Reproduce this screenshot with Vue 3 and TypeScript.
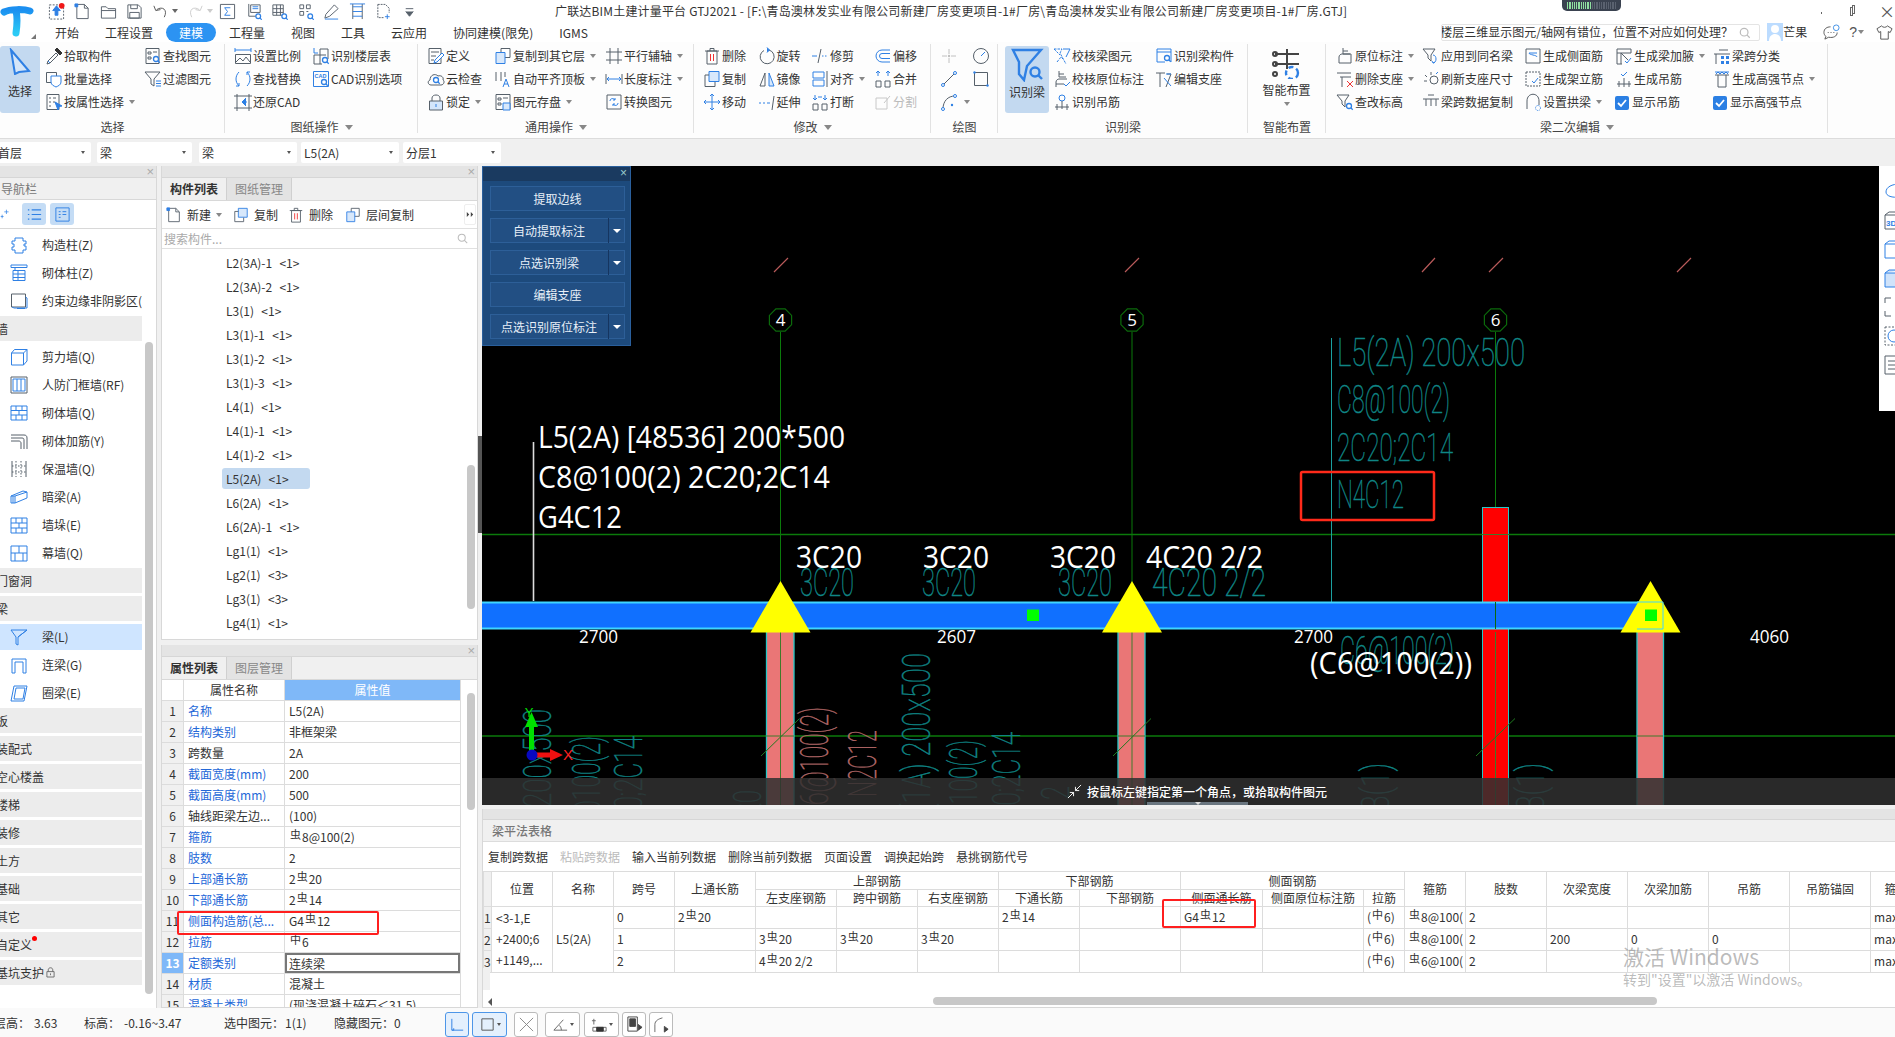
<template>
  <div class="app">
    <!-- title + tabs -->
    <header class="head">
      <div class="logo">
        <svg width="34" height="36" viewBox="0 0 34 36">
          <defs>
            <linearGradient id="lg" x1="0" y1="0" x2="0" y2="1">
              <stop offset="0" stop-color="#1b8ff0" />
              <stop offset="1" stop-color="#2ccbf5" />
            </linearGradient>
          </defs>
          <path d="M4 10c6-3 20-3 26-1M16 9c2 8 1 15 0 22" fill="none" stroke="url(#lg)" stroke-width="7" stroke-linecap="round" />
        </svg>
        <i class="logo-tri"></i>
      </div>
      <div class="head-main">
        <div class="qrow">
          <div class="quick">
            <span v-for="(q, i) in quick" :key="i" class="q-item" :class="{ redo: q.pale }">
              <svg class="ico" viewBox="0 0 18 18" v-html="icons[q.i]"></svg>
              <i v-if="q.c" class="caret" :class="{ pale: q.pale }"></i>
            </span>
          </div>
          <div class="wintitle">广联达BIM土建计量平台 GTJ2021 - [F:\青岛澳林发实业有限公司新建厂房变更项目-1#厂房\青岛澳林发实业有限公司新建厂房变更项目-1#厂房.GTJ]</div>
          <div class="winbtns">
            <span class="w-min"></span>
            <span class="w-max"></span>
            <span class="w-close">×</span>
          </div>
        </div>
        <div class="trow">
          <nav class="tabs">
            <span v-for="t in tabs" :key="t" class="tab" :class="{ on: t === '建模' }">{{ t }}</span>
          </nav>
          <div class="trow-right">
            <div class="helpbox">
              <span class="helptext">楼层三维显示图元/轴网有错位，位置不对应如何处理？</span>
              <svg class="helpmag" viewBox="0 0 14 14"><circle cx="6" cy="6" r="4.5" fill="none" stroke="#bbb" stroke-width="1.4" /><path d="M9.5 9.5 12.5 12.5" stroke="#bbb" stroke-width="1.4" /></svg>
            </div>
            <svg class="avatar" viewBox="0 0 16 18"><rect width="16" height="18" fill="#bcdcff" /><circle cx="8" cy="6" r="4" fill="#fff" /><path d="M2 18c0-5 3-7 6-7s6 2 6 7z" fill="#fff" /></svg>
            <span class="uname">芒果</span>
            <svg class="top-ic chat" viewBox="0 0 18 18"><path d="M8 3c-4 0-7 2-7 6 0 2 1 3 2 4l-1 3 4-2c5 1 9-1 9-5" fill="none" stroke="#555" /><circle cx="14" cy="4" r="3" fill="none" stroke="#3d8ee6" /><path d="M5 9h1M8 9h1M11 9h1" stroke="#555" /></svg>
            <span class="qmark">?</span><i class="caret mini"></i>
            <svg class="top-ic shirt" viewBox="0 0 18 18"><path d="M6 2 1 5l2 4 2-1v8h8V8l2 1 2-4-5-3c-1 2-5 2-6 0z" fill="none" stroke="#555" /></svg>
            <span class="upchev"></span>
          </div>
        </div>
      </div>
      <div class="gadget"><i v-for="n in 22" :key="n" :class="{ lit: n < 12 }"></i></div>
    </header>

    <!-- ribbon -->
    <section class="ribbon">
      <div v-for="g in ribbon" :key="g.title" class="rgroup" :style="{ width: g.w + 'px', paddingLeft: g.pad + 'px' }">
        <div class="rbody">
          <button v-if="g.large" class="rlarge" :class="{ sel: g.large.sel }" :style="{ width: g.large.w + 'px', marginRight: (g.large.mr || 0) + 'px' }">
            <svg :width="g.large.sw" :height="g.large.sh" :viewBox="`0 0 ${g.large.sw} ${g.large.sh}`" v-html="icons[g.large.i]"></svg>
            <span :style="{ marginTop: g.large.gap + 'px' }">{{ g.large.t }}</span>
            <i v-if="g.large.c" class="caret"></i>
          </button>
          <div v-for="(c, ci) in g.cols" :key="ci" class="rcol" :style="{ width: c.w + 'px' }">
            <div v-for="it in c.items" :key="it.i + it.t" class="ritem" :class="{ off: it.off }">
              <span v-if="it.chk" class="chk"><svg viewBox="0 0 14 14"><path d="M3 7l3 3 5-6" fill="none" stroke="#fff" stroke-width="1.8" /></svg></span>
              <svg v-else class="ico" viewBox="0 0 18 18" v-html="icons[it.i]"></svg>
              <span v-if="it.t" class="ritem-t">{{ it.t }}</span>
              <i v-if="it.c" class="caret"></i>
            </div>
          </div>
        </div>
        <div class="rtitle" :style="{ marginLeft: -g.pad + 'px' }">{{ g.title }}<i v-if="g.more" class="caret big"></i></div>
      </div>
    </section>

    <!-- combo row -->
    <section class="combos">
      <div v-for="c in combos" :key="c.k" class="combo" :class="c.k">
        <span>{{ c.t }}</span><i class="caret dark"></i>
      </div>
    </section>

    <main class="main">
      <!-- navigation -->
      <aside class="nav">
        <div class="grip"><span class="x">×</span></div>
        <div class="nav-title">导航栏</div>
        <div class="nav-tools">
          <svg class="spark" viewBox="0 0 14 14"><path d="M9 1v6M6 4h6M3 8v5M1 10.500h4" stroke="#2f80e4" fill="none" /></svg>
          <span class="nbtn">
            <svg viewBox="0 0 18 18"><path d="M6 4h10M6 9h10M6 14h10M2 4h1.500M2 9h1.500M2 14h1.500" stroke="#2f80e4" stroke-width="1.300" fill="none" /></svg>
          </span>
          <span class="nbtn">
            <svg viewBox="0 0 18 18"><path d="M2 2h14v14H2zM5 6h2M9 6h4M5 9h2M9 9h4M5 12h2" stroke="#2f80e4" fill="none" /></svg>
          </span>
        </div>
        <div class="nav-list">
          <div class="nav-scroll"></div>
          <template v-for="(n, i) in navList" :key="i">
            <div v-if="n.h" class="nav-h">
              <span>{{ n.t }}</span>
              <i v-if="n.dot" class="reddot"></i>
              <svg v-if="n.lock" class="navlock" viewBox="0 0 10 12"><path d="M2.500 5V3c0-3 5-3 5 0v2M1 5h8v6H1zM5 7v2" fill="none" stroke="#666" /></svg>
            </div>
            <div v-else class="nav-i" :class="{ sel: n.sel }">
              <svg class="nico" viewBox="0 0 18 18" v-html="icons[n.i!]"></svg>
              <span>{{ n.t }}</span>
            </div>
          </template>
        </div>
      </aside>

      <!-- component list + properties -->
      <div class="mid">
        <section class="panel comp">
          <div class="grip"><span class="x">×</span></div>
          <div class="ptabs"><span class="ptab on">构件列表</span><span class="ptab">图纸管理</span></div>
          <div class="ctools">
            <span v-for="t in compTools" :key="t.t" class="ctool" :style="{ marginRight: t.mr + 'px' }">
              <svg class="ico" viewBox="0 0 18 18" v-html="icons[t.i]"></svg>{{ t.t }}<i v-if="t.c" class="caret"></i>
            </span>
            <span class="overflow"><svg viewBox="0 0 10 8"><path d="M1 1l3 3-3 3zM6 1l3 3-3 3z" fill="#444" /></svg></span>
          </div>
          <div class="csearch">
            <span>搜索构件...</span>
            <svg viewBox="0 0 14 14"><circle cx="6" cy="6" r="4.500" fill="none" stroke="#bbb" stroke-width="1.300" /><path d="M9.500 9.500 13 13" stroke="#bbb" stroke-width="1.300" /></svg>
          </div>
          <div class="clist">
            <div class="cscroll"></div>
            <div v-for="c in compList" :key="c" class="crow"><span :class="{ on: c === 'L5(2A)  <1>' }">{{ c }}</span></div>
          </div>
        </section>

        <section class="panel props">
          <div class="grip"><span class="x">×</span></div>
          <div class="ptabs"><span class="ptab on">属性列表</span><span class="ptab">图层管理</span></div>
          <div class="ptable">
            <div class="pscroll"></div>
            <div class="prow phead">
              <span class="pn"></span><span class="pk">属性名称</span><span class="pv">属性值</span>
            </div>
            <div v-for="(r, i) in propRows" :key="i" class="prow" :class="{ cur: i === 12 }">
              <span class="pn">{{ i + 1 }}</span>
              <span class="pk" :class="{ link: r.link }">{{ r.k }}</span>
              <span class="pv" v-html="rebar(r.v)"></span>
            </div>
            <div class="redmark pmark"></div>
          </div>
        </section>
      </div>

      <!-- drawing + table -->
      <div class="right">
        <div class="handle"></div>
        <div class="canvas">
          <svg class="draw" width="1413" height="639" viewBox="482 166 1413 639">
            <g stroke="#0b7a0b" stroke-width="1.300">
              <path d="M482 534.500H1895M482 736H1895" fill="none" />
              <path d="M780.500 332V805M1132 332V805M1495.500 332V805" fill="none" stroke-width="1" />
            </g>
            <g stroke="#b85a5a" stroke-width="1.200">
              <path d="M774 272 788 258M1125 272 1139 258M1422 272 1435 258M1489 272 1503 258M1677 272 1691 258" />
            </g>
            <g v-for="a in axes" :key="a.n">
              <polygon :points="octagon(a.x, 320, 12)" fill="#000" stroke="#0b6a0b" stroke-width="1.200" />
              <text :x="a.x" y="326" class="axis-n" text-anchor="middle">{{ a.n }}</text>
            </g>
            <path d="M1331.500 338V614" stroke="#1ba0a0" fill="none" />

            <!-- columns -->
            <rect x="1482.500" y="507.500" width="26" height="300" fill="#ff0000" stroke="#25c8c8" />
            <rect x="766.500" y="629" width="27.500" height="180" fill="#ea7676" stroke="#25c8c8" stroke-width="1.300" />
            <rect x="1118" y="629" width="27" height="180" fill="#ea7676" stroke="#25c8c8" stroke-width="1.300" />
            <rect x="1637" y="629" width="26.500" height="180" fill="#ea7676" stroke="#25c8c8" stroke-width="1.300" />
            <path d="M780.500 632V805M1132 632V805M1495.500 632V805M1637 736H1663M1118 736H1145M766 736H794M1482 534.500H1509" stroke="#3f7a2a" fill="none" />
            <path d="M761 756 799.500 718.500M1113 756 1151 718.500M1476 756 1515 718.500" stroke="#1f7a1f" fill="none" />

            <!-- beam -->
            <rect x="478" y="602.500" width="1172" height="26" fill="#1070ff" stroke="#3fd5ff" stroke-width="2" />
            <path d="M533.500 442V601" stroke="#ddd" stroke-width="1.600" fill="none" />
            <path d="M1495.500 602V629" stroke="#0b6a0b" fill="none" />
            <polygon v-for="t in triangles" :key="t" :points="`${t - 30},632.500 ${t},581 ${t + 30},632.500`" fill="#ffff00" />
            <path d="M1637 602h26v27h-26" fill="none" stroke="#3fd5ff" />
            <rect x="1027" y="609.500" width="12" height="11.500" fill="#00ff00" />
            <rect x="1645" y="609.500" width="12" height="11.500" fill="#00ff00" />

            <!-- cad text -->
            <text v-for="(c, i) in cadText" :key="i" :x="c.x" :y="c.y" class="cad" :fill="c.c" :stroke="c.c" :font-size="c.s" :textLength="c.l" lengthAdjust="spacingAndGlyphs" :transform="c.r ? `rotate(-90 ${c.x} ${c.y})` : undefined">{{ c.t }}</text>
            <text v-for="(w, i) in whiteText" :key="'w' + i" :x="w.x" :y="w.y" class="wt" :font-size="w.s" :textLength="w.l" lengthAdjust="spacingAndGlyphs">{{ w.t }}</text>

            <rect x="1301" y="472" width="133" height="48" rx="1.500" fill="none" stroke="#ff2a1a" stroke-width="2.500" />

            <!-- axis gizmo -->
            <path d="M531.500 755V722" stroke="#00e000" stroke-width="5" fill="none" />
            <polygon points="525,727 531.500,712 538,727" fill="#00e000" />
            <path d="M532 755H552" stroke="#f01010" stroke-width="5" fill="none" />
            <polygon points="550,749 563,755 550,761" fill="#f01010" />
            <circle cx="532" cy="755" r="5.500" fill="#0808c0" />
            <text x="529" y="717" class="giz" fill="#00e000" font-size="13" text-anchor="middle">Y</text>
            <text x="568" y="760" class="giz" fill="#ff2020" font-size="15" text-anchor="middle">X</text>
          </svg>

          <div class="fpanel">
            <div class="fhead"><span>×</span></div>
            <div v-for="b in floatBtns" :key="b.t" class="fbtn">
              <span class="fbtn-t">{{ b.t }}</span>
              <span v-if="b.drop" class="fdrop"><i></i></span>
            </div>
          </div>

          <div class="sidebar">
            <svg v-for="(s, i) in sideIcons" :key="i" viewBox="0 0 20 20" v-html="s"></svg>
          </div>

          <div class="hint">
            <svg viewBox="0 0 16 16"><path d="M1 15 7 9M3 9h4v4M15 1 9 7M13 7H9V3" fill="none" stroke="#fff" /></svg>
            <span>按鼠标左键指定第一个角点，或拾取构件图元</span>
          </div>
          <div class="pull"><i></i></div>
        </div>

        <section class="lower">
          <div class="grip plain"></div>
          <div class="lower-title">梁平法表格</div>
          <div class="ltools">
            <span v-for="t in tableTools" :key="t" :class="{ dim: t === '粘贴跨数据' }">{{ t }}</span>
          </div>
          <div class="tblwrap">
            <table class="span-table">
              <colgroup><col v-for="(w, i) in colW" :key="i" :style="{ width: w + 'px' }" /></colgroup>
              <thead>
                <tr class="h1">
                  <th rowspan="2" class="rn"></th>
                  <th rowspan="2">位置</th>
                  <th rowspan="2">名称</th>
                  <th rowspan="2">跨号</th>
                  <th rowspan="2">上通长筋</th>
                  <th colspan="3">上部钢筋</th>
                  <th colspan="2">下部钢筋</th>
                  <th colspan="3">侧面钢筋</th>
                  <th v-for="h in tailHeads" :key="h" rowspan="2">{{ h }}</th>
                </tr>
                <tr class="h2">
                  <th v-for="h in subHeads" :key="h">{{ h }}</th>
                </tr>
              </thead>
              <tbody>
                <tr v-for="(r, i) in spanRows" :key="i">
                  <td class="rn">{{ i + 1 }}</td>
                  <td v-if="i === 0" rowspan="3" class="loc">&lt;3-1,E<br />+2400;6<br />+1149,...</td>
                  <td v-if="i === 0" rowspan="3">L5(2A)</td>
                  <td v-for="(c, j) in r" :key="j" v-html="rebar(c)"></td>
                </tr>
              </tbody>
            </table>
            <div class="tbl-gutter"></div>
            <div class="hscroll"><i class="harrow"></i><span class="hthumb"></span></div>
            <div class="redmark tmark"></div>
          </div>
          <div class="watermark">
            <b>激活 Windows</b>
            <small>转到"设置"以激活 Windows。</small>
          </div>
        </section>
      </div>
    </main>

    <!-- status bar -->
    <footer class="status">
      <span class="st-a">层高：</span><span class="st-b">3.63</span>
      <span class="st-c">标高：</span><span class="st-d">-0.16~3.47</span>
      <span class="st-e">选中图元：</span><span class="st-f">1(1)</span>
      <span class="st-g">隐藏图元：</span><span class="st-h">0</span>
      <div class="sbtns">
        <span v-for="b in statusBtns" :key="b.i" class="sbtn" :class="{ on: b.on, wide: b.c }" :style="{ marginRight: b.mr + 'px' }">
          <svg viewBox="0 0 18 18" v-html="icons[b.i]"></svg>
          <i v-if="b.c" class="caret dark"></i>
        </span>
      </div>
    </footer>
  </div>
</template>

<script setup lang="ts">
const B = '#2f80e4'
const G = '#56606a'
const p = (d: string, c = G, f = 'none') => `<path d="${d}" stroke="${c}" fill="${f}"/>`
const mag = (x: number, y: number, r = 2.5) =>
  `<circle cx="${x}" cy="${y}" r="${r}" fill="#fff" stroke="${B}" stroke-width="1.300"/><path d="M${x + r * 0.7} ${y + r * 0.7}l2 2" stroke="${B}" stroke-width="1.300"/>`

const icons: Record<string, string> = {
  // quick access
  upload: p('M1.500 2h15v15h-15z', G).replace('/>', ' stroke-dasharray="2 1.500"/>') + p('M9 3 5 8h2.500v5h3V8H13z', B, B) + '<circle cx="14.500" cy="3" r="3" fill="#f01818"/>',
  newdoc: p('M3 1.500h8l4 4v11H3zM11 1.500v4h4') + p('M1 1h3v3H1z', B, B),
  open: p('M1.500 4h5l2 2h8v10h-15z') + p('M1.500 8h15'),
  save: p('M2 2h11l3 3v11H2zM5 2v4h7V2M4 10h10v6H4z'),
  undo: p('M5 7c6-4 12 0 8 8M2 3l2 5 5-1', '#555'),
  redo: p('M13 7C7 3 1 7 5 15M16 3l-2 5-5-1', '#ccc'),
  sum: p('M1.500 1.500h15v15h-15z') + p('M12 5H6l3 4-3 4h6', B),
  qa: p('M4 1v13h13M6 2h10v8H6z') + p('M8 4h6M8 6h6', B) + mag(14, 14),
  qb: p('M2 2h11v11H2zM2 6h11M2 10h11M6 2v11M10 2v11') + mag(14, 14),
  qc: p('M3 2h4v4H3zM10 2h4v4h-4zM3 9h4v4H3zM10 9h2') + mag(14, 14),
  pen: p('M12 2l4 4-9 8-5 2 1-4z') + p('M2 17h14', B),
  qd: p('M4 1v16M14 1v16') + p('M4 4h10M4 9h10M4 14h10M1 1h16', B),
  qe: p('M3 1.500h8l4 4v5M3 1.500v14h6') .replace('/>', ' stroke-dasharray="2 1"/>') + p('M13 12v5M10.500 14.500h5', B),
  more: p('M5 6h8', G) + p('M5 9l4 5 4-5', G, G),
  // 选择
  pick: p('M3 14 11 6l2 2-8 8-3 1z') + p('M10 3l5 5', '#333') + p('M12 1l5 5-2 2-5-5z', '#333', '#333') + p('M3 14l2 2', B),
  findEl: p('M2 1.500h13v15H2zM4 5h3v2H4zM9 5h4M4 10h3v2H4z') + mag(12, 12),
  batch: p('M1.500 2.500h10v10h-10z') + p('M6 6h10v6c0 3-3 4-5 5-2-1-5-2-5-5z', B, '#fff'),
  byProp: p('M2 1.500h12v15H2zM4 5h2M8 5h3M4 9h2M8 9h2M4 13h2') + p('M10 9l7 4-3 .5-1 3.500z', B, B),
  filter: p('M1 2h15l-6 7v7l-3-2V9z') + p('M12 11h5M12 13.500h5M12 16h5', B),
  // 图纸操作
  scale: p('M1 1v4M17 1v4M1 3h16', B) + p('M1.500 7.500h15v9h-15zM2 15l4-4 3 3 3-4 4 5'),
  floorT: p('M2 1v5h4', B) + p('M8 2h8v10M2 8h12M2 8v9h8M8 2v15') + mag(13, 13),
  replace: p('M5 2C1 6 1 12 5 16M2 16h3v-3', B) + p('M13 16c4-4 4-10 0-14M16 2h-3v3', B),
  cadOpt: p('M1.500 1.500h15v15h-15z', B) + `<text x="2.500" y="8" font-size="5.500" font-family="Liberation Sans" font-weight="700" fill="${B}">CAD</text>` + mag(12, 12),
  restore: p('M3 1v17M15 1v17M0 3h18M0 15h18') + p('M12 5 8 9l4 4M8 9h5', B, B),
  // 通用操作
  define: p('M2 1.500h12v15H2zM4 5h8M4 9h5M4 13h3') + p('M15 6l2 2-7 7-3 1 1-3z', B, '#fff'),
  cloud: p('M4 15c-3 0-4-4-1-5 0-5 5-7 8-4 3-1 6 1 5 4 2 1 1 5-2 5z') + mag(9, 10),
  lock: p('M5 8V5c0-4 8-4 8 0v3') + p('M2.500 8h13v9h-13z', G, '#d4e6fb') + p('M9 11v3', B),
  copyF: p('M7 1.500h9v9H7z', G, '#fff') + p('M2 5.500h9v11H2z', B, '#d8e8fb'),
  alignT: p('M2 2v9M7 2v9M11 2v5') + p('M9 17l3-8 3 8M10 14h4', B),
  store: p('M2 1.500h14v15H2zM4 5h3v2H4zM9 5h5M4 10h3v2H4z') + p('M9 10h7v7H9z', B, '#d8e8fb'),
  gridA: p('M1 5h16M1 13h16M5 1v16M13 1v16'),
  dim: p('M1 4v10M17 4v10') + p('M2 9h14M2 9l2-2M2 9l2 2M16 9l-2-2M16 9l-2 2', B),
  conv: p('M2 2h14v14H2z') + p('M5 8c0-3 4-3 5-1M10 5v2H8M13 10c0 3-4 3-5 1M8 13v-2h2', B),
  // 修改
  del: p('M4 4h10v13H4zM2 4h14M7 4V1.500h4V4') + p('M7.500 7v7M10.500 7v7', '#e33'),
  copy: p('M6 1.500h10v10H6z', B, '#d8e8fb') + p('M6 5H2v11.500h10V12'),
  move: p('M9 1v16M1 9h16M7 3l2-2 2 2M7 15l2 2 2-2M3 7 1 9l2 2M15 7l2 2-2 2', B),
  rotate: p('M11 3A7 7 0 1 1 6 3.500') + p('M9 .5l2.500 2.500L9 5.500', B, B),
  mirror: p('M2 16 7 3v13z', G) + p('M16 16 11 3v13z', B, '#d8e8fb'),
  extend: p('M1 10h2M5 10h2M9 10h3', B) + p('M16 3l-2 14'),
  trim: p('M1 9h5M11 9h1.500M14 9h1.500', B) + p('M10 2 7 16'),
  alignO: p('M2 2h11v6H2zM2 10h11v6H2z', B) + p('M16 1v16'),
  breakI: p('M2 11h5v6H2zM11 11h5v6h-5z') + p('M4 2v4M2 5l2 2 2-2M14 2v4M12 5l2 2 2-2M7 4h4', B),
  merge: p('M2 11h5v6H2zM11 11h5v6h-5z') + p('M4 2v4M14 2v4M2 3l2-2 2 2M12 3l2-2 2 2', B),
  offset: p('M16 3H8a6 6 0 0 0 0 12h8M16 6.500H8a2.500 2.500 0 0 0 0 5h8', B),
  split: p('M2 5h11v11H2zM10 10l6-7', '#c8c8c8'),
  // 绘图
  point: p('M9 2v5M9 11v5M2 9h5M11 9h5', '#c0c0c0') + '<circle cx="9" cy="9" r="1.200" fill="#c0c0c0"/>',
  circ: '<circle cx="9" cy="9" r="7.500" fill="none" stroke="#56606a"/>' + p('M9 9l4-4', B),
  lineD: p('M3 15 15 3', G) + `<circle cx="3" cy="15" r="1.500" fill="#fff" stroke="${B}"/><circle cx="15" cy="3" r="1.500" fill="#fff" stroke="${B}"/>`,
  rectD: p('M2.500 2.500h13v13h-13z') + `<circle cx="2.500" cy="2.500" r="1.200" fill="${B}"/><circle cx="15.500" cy="15.500" r="1.200" fill="${B}"/>`,
  arc: p('M3 16C3 8 8 3 15 3') + `<circle cx="3" cy="16" r="1.500" fill="#fff" stroke="${B}"/><circle cx="15" cy="3" r="1.500" fill="#fff" stroke="${B}"/><circle cx="12" cy="12" r="1.200" fill="${B}"/>`,
  // 识别梁
  chkBeam: p('M1 2h8l-2 4 6 11M1 2l6 6M4 15l4-5 2 2', B).replace('/>', ' stroke-dasharray="2.500 1"/>') + p('M10 2h7l-4 8', B),
  chkOrig: p('M6 1v6h7M6 4h5M3 17v-5c0-2 2-3 3-3h8M3 14h8') + p('M11 14l2 2 4-4', B),
  hanger: `<circle cx="9" cy="5" r="3" fill="none" stroke="${B}"/>` + p('M2 14h14M4 11v6M9 8v8M14 11v6'),
  idComp: p('M2 2h14v13', B) + p('M2 2v13h8M2 5h14', B) + mag(12, 11),
  editSup: p('M1 3h9M5 3v14M12 4l4 0-5 13', G) + p('M11 4h5M9 8l7 8', B),
  // 梁二次编辑
  orig: p('M7 1v6h7M7 4h5M3 16v-6c0-2 2-3 3-3h9v9z'),
  toSame: p('M1 2h12l-4 6v6l-3-3V8z') + p('M11 8c4 0 4 8 0 8M10 14l1 2 2-1', B),
  sideR: p('M2 2h14v14H2z') + p('M5 6h8M5 6c0 2 8 2 8 4', B),
  haunch: p('M2 2h14v4M2 2v15h5M2 6h14M6 6v11M6 6l7 7') + p('M10 14l2 2 4-5', B),
  classify: p('M1 7h16M3 7v10M6 3h9') + '<g fill="#2f80e4"><rect x="8" y="9" width="3" height="3"/><rect x="13" y="9" width="3" height="3"/><rect x="8" y="14" width="3" height="3"/><rect x="13" y="14" width="3" height="3"/></g>',
  delSup: p('M1 3h14M4 7h11M6 7v10') + p('M11 11l6 6M17 11l-6 6', '#e33'),
  refresh: p('M9 2v3M3 5l2 2M2 11h3') + `<circle cx="12" cy="10" r="4" fill="none" stroke="${G}"/>` + p('M16 2l-2 2', B),
  frame: p('M2 2h14v14H2z').replace('/>', ' stroke-dasharray="2 1"/>') + p('M8 11l2 2 4-5M5 6h.1M12 6h.1', B),
  hangGen: p('M2 14h14M4 11v6M9 8v9M14 11v6') + p('M6 4l2 2 4-4', B),
  hs: p('M2 5h14M5 5v12h8V5') + p('M2 2h14M3 4l2-2 2 2 2-2 2 2 2-2 2 2', B),
  height: p('M1 2h12l-4 6v6l-3-3V8z') + mag(13, 13),
  dataCopy: p('M1 6h16M4 6v7M14 6v7M9 6v7M6 2h6'),
  arch: p('M3 16V8c0-9 12-9 12 0v4') + `<circle cx="14" cy="15" r="2.500" fill="none" stroke="${B}" stroke-dasharray="1 1"/>` ,
  // large
  cursor: `<path d="M3 2 21 23 11 24 7 26z" fill="#d6e6f8" stroke="${B}" stroke-width="2"/>`,
  recog: `<path d="M2 2h28L16 18l-3 14-5-6V14z" fill="none" stroke="${B}" stroke-width="2.400"/><circle cx="24" cy="24" r="4.500" fill="#c3d9f0" stroke="${B}" stroke-width="2.400"/><path d="M27 27l4 4" stroke="${B}" stroke-width="2.400"/>`,
  smart: `<g stroke="#444" stroke-width="2" fill="none"><path d="M4 6h24M4 16h24M16 1v20"/><circle cx="4" cy="6" r="2"/><circle cx="4" cy="16" r="2"/><circle cx="4" cy="26" r="2"/></g><circle cx="21" cy="25" r="6" fill="none" stroke="${B}" stroke-width="2.400" stroke-dasharray="5 3"/>`,
  // nav
  nPost: p('M5 2h8v3h3v3h-2v2h2v4h-3v3H5v-3H2v-3h2V8H2V5h3z', B),
  nBrick: p('M1 1h16v2.500H1zM5 3.500v3M3 6.500h12v10H3zM3 10h12M3 13.500h12M8 6.500v10', B),
  nEdge: p('M1.500 2h14v13h-14z', G) + p('M15.500 5 17 6v10H4l-2-1M7 16.500h8', B),
  nShear: p('M1.500 5h12v12h-12zM1.500 5l3-3.500H17V13l-3.500 4M13.500 5 17 1.500', B),
  nDoor: p('M1 1h16v16H1z', G) + p('M3 3h12v12H3zM7 3v12M11 3v12', B),
  nWall: p('M1 2h16v14H1zM1 6.500h16M1 11h16M6 2v4.500M12 2v4.500M9 6.500V11M6 11v5M12 11v5', B),
  nRebar: p('M1 3h13c2 0 3 1 3 3v11M1 6h11c2 0 2 1 2 3v8M1 9h8c1 0 2 1 2 2v6', G),
  nInsul: p('M2 1v16M16 1v16', G) + p('M6 1v16M11 1v16M2 6h14M2 12h14', G).replace('/>', ' stroke-dasharray="1.500 1.500"/>'),
  nHidden: p('M1 8 13 3l4 1v6L5 15H1zM1 8h4v7M5 8l12-4M3 8v7', B),
  nPier: p('M1 2h16v15H1zM1 7h16M1 12h16M6 2v5M12 2v5M9 7v5M6 12v5M12 12v5', B),
  nCurtain: p('M1 2h16v15H1zM1 9h16M9 2v7M5 9v8M13 9v8', B),
  nBeam: p('M1 2h16L8 9v8l-2-1V9zM8 9l9-7', B),
  nLink: p('M2 17V3h14v14h-3V6H5v11z', B),
  nRing: p('M4 2h13l-3 15H1zM6 4h9l-2 11H4z', B),
  // status
  sOrtho: p('M3 3v12h12', B) + p('M3 15h2v-2', B),
  sRect: p('M3 3h12v12H3z', '#555'),
  sCross: p('M2 2 16 16M16 2 2 16', '#888'),
  sAngle: p('M2 15 12 4M2 15h14M10 15a8 8 0 0 0-2-5', '#666'),
  sDist: p('M3 3v6M1 5h4M2 12h14v4H2z', '#666') + p('M6 12h7v4H6z', '#333', '#333'),
  sPage: p('M2 1h10v15H2z', '#444') + p('M4 3h6v8H4z', '#444', '#444') + p('M13 9l4 3-4 3z', '#444', '#444'),
  sCurve: p('M2 17V9c0-4 4-6 8-7', '#666') + p('M12 11l4 3-4 3z', '#444', '#444'),
}

interface Item { t: string; i: string; c?: boolean; off?: boolean; chk?: boolean }
interface Group {
  title: string; w: number; pad: number; more?: boolean
  large?: { t: string; i: string; w: number; sw: number; sh: number; gap: number; sel?: boolean; mr?: number; c?: boolean }
  cols: { w: number; items: Item[] }[]
}

const quick = [
  { i: 'upload' }, { i: 'newdoc' }, { i: 'open' }, { i: 'save' },
  { i: 'undo', c: true }, { i: 'redo', c: true, pale: true },
  { i: 'sum' }, { i: 'qa' }, { i: 'qb' }, { i: 'qc' }, { i: 'pen' }, { i: 'qd' }, { i: 'qe' }, { i: 'more' },
]
const tabs = ['开始', '工程设置', '建模', '工程量', '视图', '工具', '云应用', '协同建模(限免)', 'IGMS']

const ribbon: Group[] = [
  {
    title: '选择', w: 225, pad: 0,
    large: { t: '选择', i: 'cursor', w: 40, sw: 24, sh: 27, gap: 10, sel: true, mr: 5 },
    cols: [
      { w: 99, items: [{ t: '拾取构件', i: 'pick' }, { t: '批量选择', i: 'batch' }, { t: '按属性选择', i: 'byProp', c: true }] },
      { w: 80, items: [{ t: '查找图元', i: 'findEl' }, { t: '过滤图元', i: 'filter' }] },
    ],
  },
  {
    title: '图纸操作', w: 193, pad: 9, more: true,
    cols: [
      { w: 78, items: [{ t: '设置比例', i: 'scale' }, { t: '查找替换', i: 'replace' }, { t: '还原CAD', i: 'restore' }] },
      { w: 100, items: [{ t: '识别楼层表', i: 'floorT' }, { t: 'CAD识别选项', i: 'cadOpt' }] },
    ],
  },
  {
    title: '通用操作', w: 276, pad: 9, more: true,
    cols: [
      { w: 67, items: [{ t: '定义', i: 'define' }, { t: '云检查', i: 'cloud' }, { t: '锁定', i: 'lock', c: true }] },
      { w: 111, items: [{ t: '复制到其它层', i: 'copyF', c: true }, { t: '自动平齐顶板', i: 'alignT', c: true }, { t: '图元存盘', i: 'store', c: true }] },
      { w: 88, items: [{ t: '平行辅轴', i: 'gridA', c: true }, { t: '长度标注', i: 'dim', c: true }, { t: '转换图元', i: 'conv' }] },
    ],
  },
  {
    title: '修改', w: 237, pad: 9, more: true,
    cols: [
      { w: 54.5, items: [{ t: '删除', i: 'del' }, { t: '复制', i: 'copy' }, { t: '移动', i: 'move' }] },
      { w: 53.5, items: [{ t: '旋转', i: 'rotate' }, { t: '镜像', i: 'mirror' }, { t: '延伸', i: 'extend' }] },
      { w: 63, items: [{ t: '修剪', i: 'trim' }, { t: '对齐', i: 'alignO', c: true }, { t: '打断', i: 'breakI' }] },
      { w: 56, items: [{ t: '偏移', i: 'offset' }, { t: '合并', i: 'merge' }, { t: '分割', i: 'split', off: true }] },
    ],
  },
  {
    title: '绘图', w: 67, pad: 9,
    cols: [
      { w: 32, items: [{ t: '', i: 'point' }, { t: '', i: 'lineD' }, { t: '', i: 'arc', c: true }] },
      { w: 22, items: [{ t: '', i: 'circ' }, { t: '', i: 'rectD' }] },
    ],
  },
  {
    title: '识别梁', w: 250, pad: 7,
    large: { t: '识别梁', i: 'recog', w: 44, sw: 33, sh: 34, gap: 4, sel: true, mr: 4 },
    cols: [
      { w: 102, items: [{ t: '校核梁图元', i: 'chkBeam' }, { t: '校核原位标注', i: 'chkOrig' }, { t: '识别吊筋', i: 'hanger' }] },
      { w: 90, items: [{ t: '识别梁构件', i: 'idComp' }, { t: '编辑支座', i: 'editSup' }] },
    ],
  },
  {
    title: '智能布置', w: 78, pad: 0,
    large: { t: '智能布置', i: 'smart', w: 77, sw: 32, sh: 31, gap: 5, c: true },
    cols: [],
  },
  {
    title: '梁二次编辑', w: 502, pad: 10, more: true,
    cols: [
      { w: 86, items: [{ t: '原位标注', i: 'orig', c: true }, { t: '删除支座', i: 'delSup', c: true }, { t: '查改标高', i: 'height' }] },
      { w: 102, items: [{ t: '应用到同名梁', i: 'toSame' }, { t: '刷新支座尺寸', i: 'refresh' }, { t: '梁跨数据复制', i: 'dataCopy' }] },
      { w: 91, items: [{ t: '生成侧面筋', i: 'sideR' }, { t: '生成架立筋', i: 'frame' }, { t: '设置拱梁', i: 'arch', c: true }] },
      { w: 98, items: [{ t: '生成梁加腋', i: 'haunch', c: true }, { t: '生成吊筋', i: 'hangGen' }, { t: '显示吊筋', i: 'x1', chk: true }] },
      { w: 105, items: [{ t: '梁跨分类', i: 'classify' }, { t: '生成高强节点', i: 'hs', c: true }, { t: '显示高强节点', i: 'x2', chk: true }] },
    ],
  },
]

const combos = [
  { k: 'c0', t: '首层' }, { k: 'c1', t: '梁' }, { k: 'c2', t: '梁' }, { k: 'c3', t: 'L5(2A)' }, { k: 'c4', t: '分层1' },
]

interface NavRow { t: string; h?: boolean; i?: string; sel?: boolean; dot?: boolean; lock?: boolean }
const navList: NavRow[] = [
  { t: '构造柱(Z)', i: 'nPost' }, { t: '砌体柱(Z)', i: 'nBrick' }, { t: '约束边缘非阴影区(', i: 'nEdge' },
  { t: '墙', h: true },
  { t: '剪力墙(Q)', i: 'nShear' }, { t: '人防门框墙(RF)', i: 'nDoor' }, { t: '砌体墙(Q)', i: 'nWall' }, { t: '砌体加筋(Y)', i: 'nRebar' },
  { t: '保温墙(Q)', i: 'nInsul' }, { t: '暗梁(A)', i: 'nHidden' }, { t: '墙垛(E)', i: 'nPier' }, { t: '幕墙(Q)', i: 'nCurtain' },
  { t: '门窗洞', h: true }, { t: '梁', h: true },
  { t: '梁(L)', i: 'nBeam', sel: true }, { t: '连梁(G)', i: 'nLink' }, { t: '圈梁(E)', i: 'nRing' },
  { t: '板', h: true }, { t: '装配式', h: true }, { t: '空心楼盖', h: true }, { t: '楼梯', h: true }, { t: '装修', h: true },
  { t: '土方', h: true }, { t: '基础', h: true }, { t: '其它', h: true }, { t: '自定义', h: true, dot: true }, { t: '基坑支护', h: true, lock: true },
]

const compTools = [
  { t: '新建', i: 'newdoc', c: true, mr: 11 },
  { t: '复制', i: 'copy', mr: 10 },
  { t: '删除', i: 'del', mr: 12 },
  { t: '层间复制', i: 'copyF', mr: 0 },
]
const compList = [
  'L2(3A)-1  <1>', 'L2(3A)-2  <1>', 'L3(1)  <1>', 'L3(1)-1  <1>', 'L3(1)-2  <1>', 'L3(1)-3  <1>', 'L4(1)  <1>', 'L4(1)-1  <1>', 'L4(1)-2  <1>',
  'L5(2A)  <1>', 'L6(2A)  <1>', 'L6(2A)-1  <1>', 'Lg1(1)  <1>', 'Lg2(1)  <3>', 'Lg3(1)  <3>', 'Lg4(1)  <1>',
]

const propRows = [
  { k: '名称', v: 'L5(2A)', link: true },
  { k: '结构类别', v: '非框架梁', link: true },
  { k: '跨数量', v: '2A' },
  { k: '截面宽度(mm)', v: '200', link: true },
  { k: '截面高度(mm)', v: '500', link: true },
  { k: '轴线距梁左边...', v: '(100)' },
  { k: '箍筋', v: '@8@100(2)', link: true },
  { k: '肢数', v: '2', link: true },
  { k: '上部通长筋', v: '2@20', link: true },
  { k: '下部通长筋', v: '2@14', link: true },
  { k: '侧面构造筋(总...', v: 'G4@12', link: true },
  { k: '拉筋', v: '#6', link: true },
  { k: '定额类别', v: '连续梁', link: true },
  { k: '材质', v: '混凝土', link: true },
  { k: '混凝土类型', v: '(现浇混凝土碎石＜31.5)', link: true },
]

// 钢筋符号: first @ = 三级, # = 一级
function rebar(s: string) {
  return s.replace('@', '<span class="rb">虫</span>').replace('#', '<span class="rb">中</span>')
}

const axes = [{ n: 4, x: 780.5 }, { n: 5, x: 1132 }, { n: 6, x: 1495.5 }]
const triangles = [780.5, 1132, 1650.5]
function octagon(cx: number, cy: number, r: number) {
  return Array.from({ length: 8 }, (_, i) => {
    const a = Math.PI / 8 + (i * Math.PI) / 4
    return `${(cx + r * Math.cos(a)).toFixed(1)},${(cy + r * Math.sin(a)).toFixed(1)}`
  }).join(' ')
}

const TEAL = '#0f8585'
const SALMON = '#b56a6a'
const cadText = [
  { t: 'L5(2A) 200x500', x: 1337, y: 366, l: 188, s: 39, c: TEAL },
  { t: 'C8@100(2)', x: 1337, y: 413, l: 113, s: 39, c: TEAL },
  { t: '2C20;2C14', x: 1337, y: 460.5, l: 116, s: 39, c: TEAL },
  { t: 'N4C12', x: 1337, y: 508, l: 67, s: 39, c: TEAL },
  { t: '3C20', x: 800, y: 596, l: 54, s: 39, c: TEAL },
  { t: '3C20', x: 922, y: 596, l: 54, s: 39, c: TEAL },
  { t: '3C20', x: 1058, y: 596, l: 54, s: 39, c: TEAL },
  { t: '4C20 2/2', x: 1152, y: 596, l: 114, s: 39, c: TEAL },
  { t: 'C6@100(2)', x: 1340, y: 664, l: 114, s: 39, c: TEAL },
  { t: '200x500', x: 551, y: 807, l: 98, s: 39, c: TEAL, r: true },
  { t: 'C8@100(2)', x: 600, y: 849, l: 113, s: 39, c: TEAL, r: true },
  { t: '2C20;2C14', x: 641.5, y: 852, l: 116, s: 39, c: TEAL, r: true },
  { t: '3C20', x: 761, y: 844, l: 54, s: 39, c: TEAL, r: true },
  { t: 'C6@100(2)', x: 828, y: 820, l: 113, s: 39, c: SALMON, r: true },
  { t: 'N2C12', x: 876, y: 797, l: 67, s: 39, c: SALMON, r: true },
  { t: 'L5(1A) 200x500', x: 929.5, y: 841, l: 188, s: 39, c: TEAL, r: true },
  { t: 'C8@100(2)', x: 977, y: 853, l: 113, s: 39, c: TEAL, r: true },
  { t: '2C20;2C14', x: 1020, y: 848, l: 116, s: 39, c: TEAL, r: true },
  { t: 'C12', x: 1069, y: 830, l: 44, s: 39, c: TEAL, r: true },
  { t: '3(1)', x: 1389, y: 811, l: 48, s: 39, c: TEAL, r: true },
  { t: '3(1)', x: 1543.5, y: 811, l: 48, s: 39, c: TEAL, r: true },
]
const whiteText = [
  { t: 'L5(2A) [48536] 200*500', x: 538, y: 448, l: 307, s: 31 },
  { t: 'C8@100(2) 2C20;2C14', x: 538, y: 488, l: 292, s: 31 },
  { t: 'G4C12', x: 538, y: 528, l: 84, s: 31 },
  { t: '3C20', x: 796, y: 568, l: 66, s: 31 },
  { t: '3C20', x: 923, y: 568, l: 66, s: 31 },
  { t: '3C20', x: 1050, y: 568, l: 66, s: 31 },
  { t: '4C20 2/2', x: 1146, y: 568, l: 117, s: 31 },
  { t: '(C6@100(2))', x: 1310, y: 674, l: 162, s: 31 },
  { t: '2700', x: 579, y: 643, l: 39, s: 18 },
  { t: '2607', x: 937, y: 643, l: 39, s: 18 },
  { t: '2700', x: 1294, y: 643, l: 39, s: 18 },
  { t: '4060', x: 1750, y: 643, l: 39, s: 18 },
]

const floatBtns = [
  { t: '提取边线' }, { t: '自动提取标注', drop: true }, { t: '点选识别梁', drop: true }, { t: '编辑支座' }, { t: '点选识别原位标注', drop: true },
]

const sideIcons = [
  `<path d="M16 3C8 3 2 6 2 11c0 4 6 6 14 5" fill="none" stroke="${B}"/>`,
  `<path d="M1 5l4-3h12M1 5h14v14H1z" fill="none" stroke="${G}"/><text x="2" y="16" font-size="8" font-weight="700" font-family="Liberation Sans" fill="${B}">3D</text>`,
  `<path d="M1 5l4-3h12M1 5h14v14H1z" fill="none" stroke="${B}"/>`,
  `<path d="M1 5l4-3h12M1 5h14v14H1z" fill="#d0e3fa" stroke="${B}"/>`,
  `<path d="M1 6V1h6M1 14v5h6" fill="none" stroke="${G}"/>`,
  `<path d="M1 1h16v18H1z" fill="none" stroke="${G}" stroke-dasharray="2 1.500"/><circle cx="10" cy="10" r="6" fill="none" stroke="${B}"/>`,
  `<path d="M1 1h16v18H1zM4 6h12M4 10h12M4 14h12" fill="none" stroke="${G}"/>`,
]

const tableTools = ['复制跨数据', '粘贴跨数据', '输入当前列数据', '删除当前列数据', '页面设置', '调换起始跨', '悬挑钢筋代号']
const colW = [8, 61, 61, 61, 81, 81, 81, 81, 81, 101, 82, 101, 41, 61, 81, 81, 81, 81, 81, 100]
const tailHeads = ['箍筋', '肢数', '次梁宽度', '次梁加筋', '吊筋', '吊筋锚固', '箍筋加密长度']
const subHeads = ['左支座钢筋', '跨中钢筋', '右支座钢筋', '下通长筋', '下部钢筋', '侧面通长筋', '侧面原位标注筋', '拉筋']
const spanRows = [
  ['0', '2@20', '', '', '', '2@14', '', 'G4@12', '', '(#6)', '@8@100(', '2', '', '', '', '', 'max('],
  ['1', '', '3@20', '3@20', '3@20', '', '', '', '', '(#6)', '@8@100(', '2', '200', '0', '0', '', 'max('],
  ['2', '', '4@20 2/2', '', '', '', '', '', '', '(#6)', '@6@100(', '2', '', '', '', '', 'max('],
]

const statusBtns = [
  { i: 'sOrtho', on: true, mr: 3 },
  { i: 'sRect', on: true, c: true, mr: 7 },
  { i: 'sCross', mr: 7 },
  { i: 'sAngle', c: true, mr: 4 },
  { i: 'sDist', c: true, mr: 3 },
  { i: 'sPage', mr: 3 },
  { i: 'sCurve', mr: 0 },
]
</script>

<style scoped>
.app {
  width: 1895px;
  height: 1037px;
  display: flex;
  flex-direction: column;
  overflow: hidden;
  background: #f0f0f0;
  color: #333;
  font-family: "Noto Sans CJK SC", "Liberation Sans", sans-serif;
  font-size: 12px;
  line-height: 1;
}
.caret {
  display: inline-block;
  width: 0;
  height: 0;
  margin-left: 5px;
  border-left: 3px solid transparent;
  border-right: 3px solid transparent;
  border-top: 4px solid #888;
  flex-shrink: 0;
}
.caret.pale { border-top-color: #ccc; }
.caret.dark { border-top-color: #555; }
.caret.big { border-left-width: 4px; border-right-width: 4px; border-top-width: 5px; margin-left: 6px; }
.caret.mini { margin-left: 1px; }
.ico { width: 18px; height: 18px; flex-shrink: 0; }

/* head */
.head { display: flex; height: 42px; background: #fff; position: relative; }
.logo { width: 40px; position: relative; padding-top: 2px; box-sizing: border-box; }
.logo svg { display: block; }
.logo-tri {
  position: absolute;
  left: 31px;
  bottom: 3px;
  width: 0;
  height: 0;
  border-bottom: 5px solid #777;
  border-left: 5px solid transparent;
}
.head-main { flex: 1; min-width: 0; }
.qrow { height: 22px; display: flex; align-items: center; }
.quick { width: 515px; display: flex; align-items: center; padding-left: 8px; box-sizing: border-box; gap: 9px; flex-shrink: 0; }
.q-item { display: inline-flex; align-items: center; width: 17px; }
.q-item:has(.caret) { width: 26px; }
.q-item.redo { width: 23px; }
.q-item .ico { width: 17px; height: 17px; }
.q-item .caret { margin-left: 3px; border-top-color: #666; }
.q-item .caret.pale { border-top-color: #ccc; }
.wintitle { white-space: nowrap; font-size: 12px; color: #333; letter-spacing: 0.18px; }
.winbtns { margin-left: auto; display: flex; align-items: center; width: 74px; color: #555; flex-shrink: 0; }
.w-min { width: 8px; height: 2px; background: #666; margin-top: 4px; }
.w-max { width: 7px; height: 7px; border: 1px solid #666; margin-left: 28px; box-shadow: 2px -2px 0 -1px #fff, 2px -2px 0 0 #666; }
.w-close { margin-left: 26px; font-size: 16px; }
.gadget {
  position: absolute;
  left: 1562px;
  top: 0;
  width: 59px;
  height: 11px;
  box-sizing: border-box;
  padding: 2px 5px 2px;
  background: #3a4250;
  border-radius: 0 0 5px 5px;
  display: flex;
  gap: 1px;
}
.gadget i { flex: 1; background: #5a6270; }
.gadget i.lit { background: #8fe0a0; }
.trow { height: 20px; display: flex; align-items: center; }
.tabs { display: flex; margin-left: 2px; }
.tab { padding: 0 13px; height: 19px; line-height: 19px; border-radius: 10px; white-space: nowrap; }
.tab.on { background: #2c93f2; color: #fff; }
.trow-right { margin-left: auto; display: flex; align-items: center; }
.helpbox {
  width: 319px;
  height: 17px;
  box-sizing: border-box;
  border: 1px solid #e4e4e4;
  border-radius: 2px;
  display: flex;
  align-items: center;
  overflow: hidden;
  position: relative;
  background: #fff;
}
.helptext { margin-left: -2px; white-space: nowrap; }
.helpmag { position: absolute; right: 8px; top: 2px; width: 12px; height: 12px; background: #fff; }
.avatar { width: 16px; height: 18px; margin-left: 7px; }
.uname { margin-left: 0; width: 24px; font-size: 12px; }
.top-ic { width: 17px; height: 17px; }
.chat { margin-left: 16px; }
.qmark { margin-left: 9px; font-size: 14px; color: #555; font-family: "Liberation Sans", sans-serif; }
.shirt { margin-left: 12px; }
.upchev { margin-left: 5px; width: 6px; height: 6px; border-left: 1px solid #666; border-top: 1px solid #666; transform: rotate(45deg); margin-right: -10px; margin-top: 4px; }

/* ribbon */
.ribbon { height: 97px; display: flex; background: #fdfdfd; border-bottom: 1px solid #dcdcdc; box-sizing: border-box; padding-top: 2px; flex-shrink: 0; }
.rgroup { box-sizing: border-box; position: relative; flex-shrink: 0; }
.rgroup::after {
  content: "";
  position: absolute;
  right: 0;
  top: 0;
  bottom: 5px;
  width: 1px;
  background: #e2e2e2;
}
.rbody { display: flex; height: 69px; }
.rcol { display: flex; flex-direction: column; flex-shrink: 0; }
.ritem { height: 23px; display: flex; align-items: center; white-space: nowrap; }
.ritem .ico { margin-right: 1px; }
.ritem.off { color: #bbb; }
.chk {
  width: 14px;
  height: 14px;
  margin: 2px 3px 0 0;
  background: #2b7fe3;
  border-radius: 2px;
  flex-shrink: 0;
}
.chk svg { width: 14px; height: 14px; display: block; }
.rlarge {
  border: 0;
  padding: 2px 0 0;
  background: none;
  border-radius: 3px;
  height: 67px;
  margin-top: 2px;
  display: flex;
  flex-direction: column;
  align-items: center;
  font: inherit;
  color: #333;
  flex-shrink: 0;
}
.rlarge.sel { background: #c3d9f0; }
.rlarge .caret { margin: 6px 0 0; }
.rtitle { text-align: center; margin-top: 7px; height: 14px; color: #444; display: flex; align-items: center; justify-content: center; }

/* combos */
.combos { height: 27px; display: flex; align-items: flex-start; flex-shrink: 0; background: #f0f0f0; box-sizing: border-box; padding-top: 3px; }
.combo {
  height: 21px;
  background: #fff;
  border-radius: 2px;
  display: flex;
  align-items: center;
  justify-content: space-between;
  padding: 0 6px 0 3px;
  box-sizing: border-box;
  margin-right: 4px;
  flex-shrink: 0;
}
.combo .caret { border-left-width: 2.500px; border-right-width: 2.500px; border-top-width: 3px; }
.c0 { width: 92px; margin-left: -1px; margin-right: 6px; }
.c0 span { margin-left: -4px; }
.c1 { width: 95px; margin-right: 7px; }
.c2 { width: 98px; }
.c3 { width: 98px; }
.c4 { width: 98px; }

/* main */
.main { height: 842px; display: flex; flex-shrink: 0; }
.grip { height: 12px; background: #e4e4e4; position: relative; border-bottom: 1px solid #d6d6d6; box-sizing: border-box; }
.grip .x { position: absolute; right: 2px; top: -1px; color: #aaa; font-size: 13px; font-family: "Liberation Sans", sans-serif; }
.nav { width: 157px; margin-right: 4px; background: #fff; border-right: 1px solid #d8d8d8; box-sizing: border-box; display: flex; flex-direction: column; flex-shrink: 0; }
.nav-title { height: 21px; line-height: 21px; background: #f0f0f0; color: #777; padding-left: 1px; border-bottom: 1px solid #d8d8d8; flex-shrink: 0; }
.nav-tools { height: 28px; display: flex; align-items: center; border-bottom: 1px solid #d8d8d8; flex-shrink: 0; padding-left: 0; }
.spark { width: 10px; height: 12px; margin-right: 12px; }
.nbtn { width: 24px; height: 22px; background: #c4dcf5; border-radius: 3px; margin-right: 4px; display: flex; align-items: center; justify-content: center; }
.nbtn svg { width: 17px; height: 17px; }
.nav-list { flex: 1; position: relative; overflow: hidden; padding-top: 2px; }
.nav-scroll { position: absolute; left: 145px; top: 113px; width: 8px; height: 652px; background: #c8c8c8; border-radius: 4px; }
.nav-i { width: 142px; height: 28px; display: flex; align-items: center; white-space: nowrap; overflow: hidden; }
.nav-i.sel { background: #cfe5ff; height: 26px; margin: 1px 0; }
.nico { width: 18px; height: 18px; margin-left: 10px; margin-right: 14px; flex-shrink: 0; }
.nav-h {
  width: 142px;
  height: 25px;
  background: #ececec;
  margin-bottom: 3px;
  display: flex;
  align-items: center;
  white-space: nowrap;
  position: relative;
}
.nav-h span { margin-left: -4px; }
.nav-i + .nav-h { margin-top: 1px; }
.nav-h + .nav-i { margin-top: -1px; }
.nav-h + .nav-i.sel { margin-top: 0; }
.reddot { position: absolute; left: 32px; top: 4px; width: 5px; height: 5px; background: #f00; border-radius: 50%; }
.navlock { width: 9px; height: 11px; margin-left: 2px; }

/* panels */
.mid { width: 317px; margin-right: 4px; display: flex; flex-direction: column; gap: 5px; flex-shrink: 0; }
.panel { background: #fff; border: 1px solid #d8d8d8; border-top: 0; box-sizing: border-box; display: flex; flex-direction: column; overflow: hidden; }
.comp { height: 474px; }
.props { height: 363px; }
.ptabs { height: 23px; display: flex; background: #f0f0f0; border-bottom: 1px solid #d8d8d8; flex-shrink: 0; box-sizing: border-box; }
.ptab { width: 65px; line-height: 22px; text-align: center; background: #e3e3e3; color: #888; border-right: 1px solid #d0d0d0; box-sizing: border-box; }
.ptab.on { background: #f0f0f0; color: #333; font-weight: 700; }
.ctools { height: 27px; display: flex; align-items: center; padding-left: 4px; border-bottom: 1px solid #e0e0e0; flex-shrink: 0; position: relative; }
.ctool { display: inline-flex; align-items: center; white-space: nowrap; }
.ctool .ico { width: 16px; height: 16px; margin-right: 5px; }
.overflow { position: absolute; right: 1px; top: 3px; width: 10px; height: 19px; background: #fff; border-radius: 2px; border: 1px solid #eee; display: flex; align-items: center; justify-content: center; }
.overflow svg { width: 8px; height: 7px; }
.csearch { height: 19px; display: flex; align-items: center; justify-content: space-between; padding: 0 9px 0 2px; border-bottom: 1px solid #e0e0e0; color: #aaa; flex-shrink: 0; }
.csearch svg { width: 11px; height: 11px; }
.clist { flex: 1; position: relative; padding-top: 1px; overflow: hidden; }
.cscroll { position: absolute; left: 305px; top: 216px; width: 8px; height: 144px; background: #c8c8c8; border-radius: 4px; }
.crow { height: 24px; display: flex; align-items: center; padding-left: 60px; white-space: pre; word-spacing: 1px; }
.crow span { padding: 4px 21px 4px 4px; border-radius: 3px; line-height: 13px; }
.crow span.on { background: #c3d9f0; }
.ptable { flex: 1; position: relative; overflow: hidden; }
.pscroll { position: absolute; left: 305px; top: 13px; width: 8px; height: 117px; background: #c8c8c8; border-radius: 4px; }
.prow { height: 21px; display: flex; border-bottom: 1px solid #dcdcdc; box-sizing: border-box; width: 299px; border-right: 1px solid #dcdcdc; }
.prow span { line-height: 20px; white-space: nowrap; overflow: hidden; box-sizing: border-box; }
.pn { width: 22px; text-align: center; background: #f0f0f0; border-right: 1px solid #dcdcdc; font-size: 12px; }
.pk { width: 101px; padding-left: 4px; border-right: 1px solid #dcdcdc; }
.pk.link { color: #2468d8; }
.pv { flex: 1; padding-left: 4px; }
.phead { height: 21px; }
.phead .pn { background: #fff; }
.phead .pk { text-align: center; padding: 0; }
.phead .pv { background: #7fb8f8; color: #fff; text-align: center; padding: 0; }
.cur .pn { background: #7fb8f8; color: #fff; font-weight: 700; }
.cur .pv { border: 2px solid #777; line-height: 17px; padding-left: 2px; }
.pv :deep(.rb), .span-table :deep(.rb) { font-size: 11px; position: relative; top: -3px; margin: 0 1px; }
.redmark { position: absolute; border: 2.500px solid #ff1f1f; border-radius: 2px; box-sizing: border-box; pointer-events: none; }
.pmark { left: 15px; top: 231px; width: 202px; height: 24px; }

/* canvas */
.right { flex: 1; min-width: 0; display: flex; flex-direction: column; gap: 4px; position: relative; }
.canvas { height: 639px; background: #000; position: relative; overflow: hidden; flex-shrink: 0; }
.draw { display: block; }
.axis-n { font-family: "Open Sans", sans-serif; font-size: 17px; fill: #fff; }
.cad { font-family: "Roboto", sans-serif; font-weight: 100; stroke-width: 0.5px; }
.wt { font-family: "Open Sans", sans-serif; fill: #fff; }
.giz { font-family: "Liberation Sans", sans-serif; }
.fpanel {
  position: absolute;
  left: 0;
  top: 0;
  width: 149px;
  height: 180px;
  box-sizing: border-box;
  background: #1d4a7c;
  border: 1px solid #2a5f9c;
  padding: 0 5px 0 7px;
}
.fhead { height: 14px; margin: 0 -5px 5px -7px; background: #1a3a60; color: #9cc; text-align: right; padding-right: 3px; font-size: 12px; font-family: "Liberation Sans", sans-serif; }
.fbtn {
  height: 25px;
  margin-bottom: 7px;
  background: #224f83;
  box-shadow: inset 0 0 0 1px #2d5f98;
  color: #e8f0f8;
  display: flex;
  align-items: center;
}
.fbtn-t { flex: 1; text-align: center; }
.fdrop { width: 16px; height: 100%; border-left: 1px solid #153560; display: flex; align-items: center; justify-content: center; }
.fdrop i { width: 0; height: 0; border-left: 4px solid transparent; border-right: 4px solid transparent; border-top: 4px solid #fff; }
.sidebar {
  position: absolute;
  right: 0;
  top: 0;
  width: 16px;
  height: 245px;
  background: #fff;
  overflow: hidden;
  display: flex;
  flex-direction: column;
  gap: 9px;
  padding: 15px 0 0 5px;
  box-sizing: border-box;
}
.sidebar svg { width: 20px; height: 20px; flex-shrink: 0; }
.handle { position: absolute; left: -4px; top: 270px; width: 4px; height: 97px; background: #555; }
.hint {
  position: absolute;
  left: 0;
  right: 0;
  bottom: 0;
  height: 27px;
  background: rgba(48, 48, 48, 0.86);
  color: #fff;
  display: flex;
  align-items: center;
  padding-left: 585px;
}
.hint svg { width: 15px; height: 15px; margin-right: 5px; }
.hint span { font-weight: 500; }
.pull { position: absolute; left: 665px; bottom: 0; width: 101px; height: 3px; background: #6a7680; display: flex; justify-content: center; }
.pull i { width: 0; height: 0; border-left: 3px solid transparent; border-right: 3px solid transparent; border-top: 3px solid #ddd; }

/* lower table */
.lower { flex: 1; position: relative; background: #fff; border-left: 1px solid #d8d8d8; border-bottom: 1px solid #d8d8d8; overflow: hidden; box-sizing: border-box; }
.grip.plain { height: 11px; }
.lower-title { height: 22px; line-height: 22px; background: #f0f0f0; color: #777; padding-left: 9px; font-weight: 500; border-bottom: 1px solid #dcdcdc; box-sizing: border-box; }
.ltools { height: 29px; display: flex; gap: 12px; align-items: center; padding-left: 5px; }
.ltools .dim { color: #bbb; }
.tblwrap { position: relative; height: 136px; overflow: hidden; }
.span-table { border-collapse: collapse; table-layout: fixed; width: 1486px; border-top: 1px solid #dcdcdc; }
.span-table th, .span-table td {
  border: 1px solid #dcdcdc;
  font-weight: 400;
  padding: 0 3px;
  white-space: nowrap;
  overflow: hidden;
  box-sizing: border-box;
}
.h1 th { height: 18px; }
.h2 th { height: 17px; }
.span-table td { height: 21px; text-align: left; padding-bottom: 2px; }
.span-table .rn { padding: 0; background: #f0f0f0; font-size: 12px; }
.span-table td.loc { line-height: 21px; padding: 0 4px 2px; }
.tbl-gutter { position: absolute; left: 0; top: 97px; width: 7px; height: 22px; background: #f0f0f0; }
.hscroll { position: absolute; left: 0; right: 0; top: 126px; height: 8px; }
.harrow { position: absolute; left: 5px; top: 1px; width: 0; height: 0; border-top: 4px solid transparent; border-bottom: 4px solid transparent; border-right: 4px solid #555; }
.hthumb { position: absolute; left: 450px; width: 724px; height: 8px; background: #c8c8c8; border-radius: 4px; }
.tmark { left: 679px; top: 28px; width: 94px; height: 29px; }
.watermark { position: absolute; left: 1140px; top: 135px; display: flex; flex-direction: column; color: rgba(130, 130, 130, 0.55); pointer-events: none; }
.watermark b { font-weight: 400; font-size: 21px; line-height: 24px; font-family: "Noto Sans CJK SC", "Open Sans", sans-serif; }
.watermark small { font-size: 14px; margin-top: 4px; white-space: nowrap; }

/* status */
.status { height: 29px; background: #fafafa; display: flex; align-items: center; position: relative; flex-shrink: 0; white-space: nowrap; padding-top: 1px; box-sizing: border-box; }
.status span { font-size: 12px; }
.status span.st-a { margin-left: -6px; width: 40px; }
.st-b { width: 50px; }
.st-c { width: 40px; }
.st-d { width: 100px; }
.st-e { width: 61px; }
.st-f { width: 49px; }
.st-g { width: 60px; }
.st-h { width: 51px; }
.sbtns { display: flex; align-items: center; margin-left: 0; }
.sbtn {
  width: 24px;
  height: 25px;
  margin-top: 2px;
  border: 1px solid #bbb;
  border-radius: 3px;
  box-sizing: border-box;
  display: inline-flex;
  align-items: center;
  justify-content: center;
  background: #fff;
}
.sbtn svg { width: 17px; height: 17px; flex-shrink: 0; }
.sbtn.wide { width: 35px; }
.sbtn .caret { margin-left: 1px; border-left-width: 2.500px; border-right-width: 2.500px; border-top-width: 3px; }
.sbtn.on { background: #e4f0fd; border-color: #4d96e8; }
</style>

<style>
html, body { margin: 0; background: #f0f0f0; overflow: hidden; }
</style>
